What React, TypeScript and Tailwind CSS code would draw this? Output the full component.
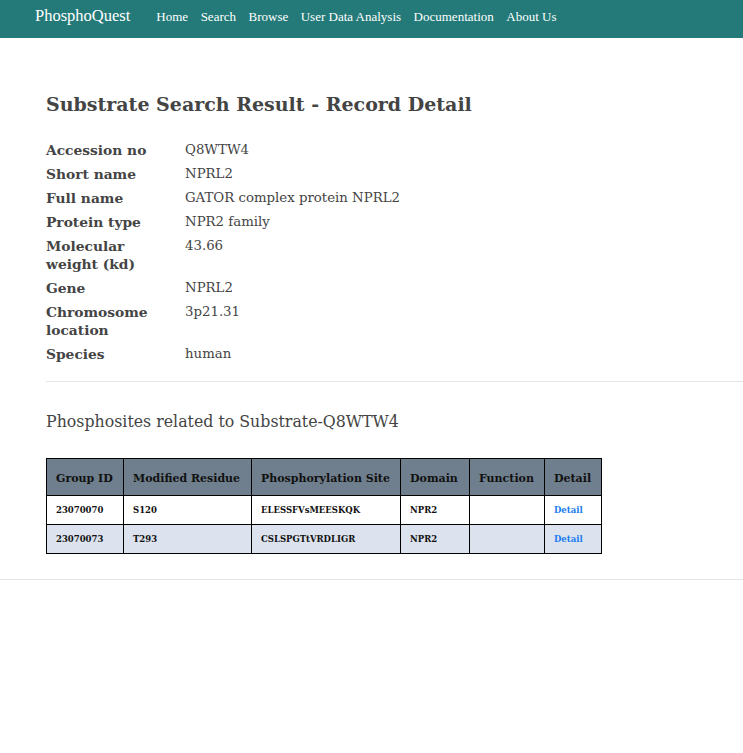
import React from 'react';

const serif = "font-['DejaVu_Serif','Liberation_Serif',serif]";

const navLinks = ['Home', 'Search', 'Browse', 'User Data Analysis', 'Documentation', 'About Us'];

const fields: [string, string][] = [
  ['Accession no', 'Q8WTW4'],
  ['Short name', 'NPRL2'],
  ['Full name', 'GATOR complex protein NPRL2'],
  ['Protein type', 'NPR2 family'],
  ['Molecular weight (kd)', '43.66'],
  ['Gene', 'NPRL2'],
  ['Chromosome location', '3p21.31'],
  ['Species', 'human'],
];

const rows = [
  { id: '23070070', residue: 'S120', site: 'ELESSFVsMEESKQK', domain: 'NPR2' },
  { id: '23070073', residue: 'T293', site: 'CSLSPGTtVRDLIGR', domain: 'NPR2' },
];

const App: React.FC = () => {
  return (
    <div className="min-h-[753px] bg-white">
      <nav className="flex h-[38px] items-center bg-[#237a78] pb-[5px] pl-[35px] font-['Liberation_Serif',serif] text-white">
        <span className="mr-[26px] text-[16.5px]">PhosphoQuest</span>
        <div className="flex gap-[12.5px] text-[13px]">
          {navLinks.map((l) => (
            <a key={l} href="#">
              {l}
            </a>
          ))}
        </div>
      </nav>

      <main className={`${serif} pt-[53px] text-[#444]`}>
        <div className="pl-[46px]">
          <h1 className="mb-[24px] text-[19px] font-bold leading-[26px]">
            Substrate Search Result - Record Detail
          </h1>
          <dl className="grid grid-cols-[139px_1fr] gap-y-[6px] leading-[18px]">
            {fields.map(([k, v]) => (
              <React.Fragment key={k}>
                <dt className="pr-[20px] text-[13.8px] font-bold">{k}</dt>
                <dd className="text-[13.3px]">{v}</dd>
              </React.Fragment>
            ))}
          </dl>
          <hr className="mt-[18px] border-[#e5e5e5]" />
          <h2 className="mt-[28px] text-[15.8px] leading-[24px]">Phosphosites related to Substrate-Q8WTW4</h2>
          <table className="mt-[24px] w-[556px] table-fixed border-collapse border border-black text-[#111]">
            <thead>
              <tr className="h-[37px] whitespace-nowrap bg-[#6f7f8d] text-left text-[11px] font-bold">
                <th className="w-[77px] border border-black px-[9px] pt-[5px]">Group ID</th>
                <th className="w-[128px] border border-black px-[9px] pt-[5px]">Modified Residue</th>
                <th className="w-[149px] border border-black px-[9px] pt-[5px]">Phosphorylation Site</th>
                <th className="w-[69px] border border-black px-[9px] pt-[5px]">Domain</th>
                <th className="w-[75px] border border-black px-[9px] pt-[5px]">Function</th>
                <th className="w-[57px] border border-black px-[9px] pt-[5px]">Detail</th>
              </tr>
            </thead>
            <tbody className="text-[8.5px] font-bold">
              {rows.map((r, i) => (
                <tr key={r.id} className={`h-[29px] ${i % 2 ? 'bg-[#dce3ee]' : 'bg-white'}`}>
                  <td className="border border-black px-[9px]">{r.id}</td>
                  <td className="border border-black px-[9px]">{r.residue}</td>
                  <td className="border border-black px-[9px]">{r.site}</td>
                  <td className="border border-black px-[9px]">{r.domain}</td>
                  <td className="border border-black px-[9px]"></td>
                  <td className="border border-black px-[9px]">
                    <a href="#" className="text-[#1a7cf0]">
                      Detail
                    </a>
                  </td>
                </tr>
              ))}
            </tbody>
          </table>
        </div>
        <hr className="mt-[25px] border-[#e5e5e5]" />
      </main>
    </div>
  );
};

export default App;
